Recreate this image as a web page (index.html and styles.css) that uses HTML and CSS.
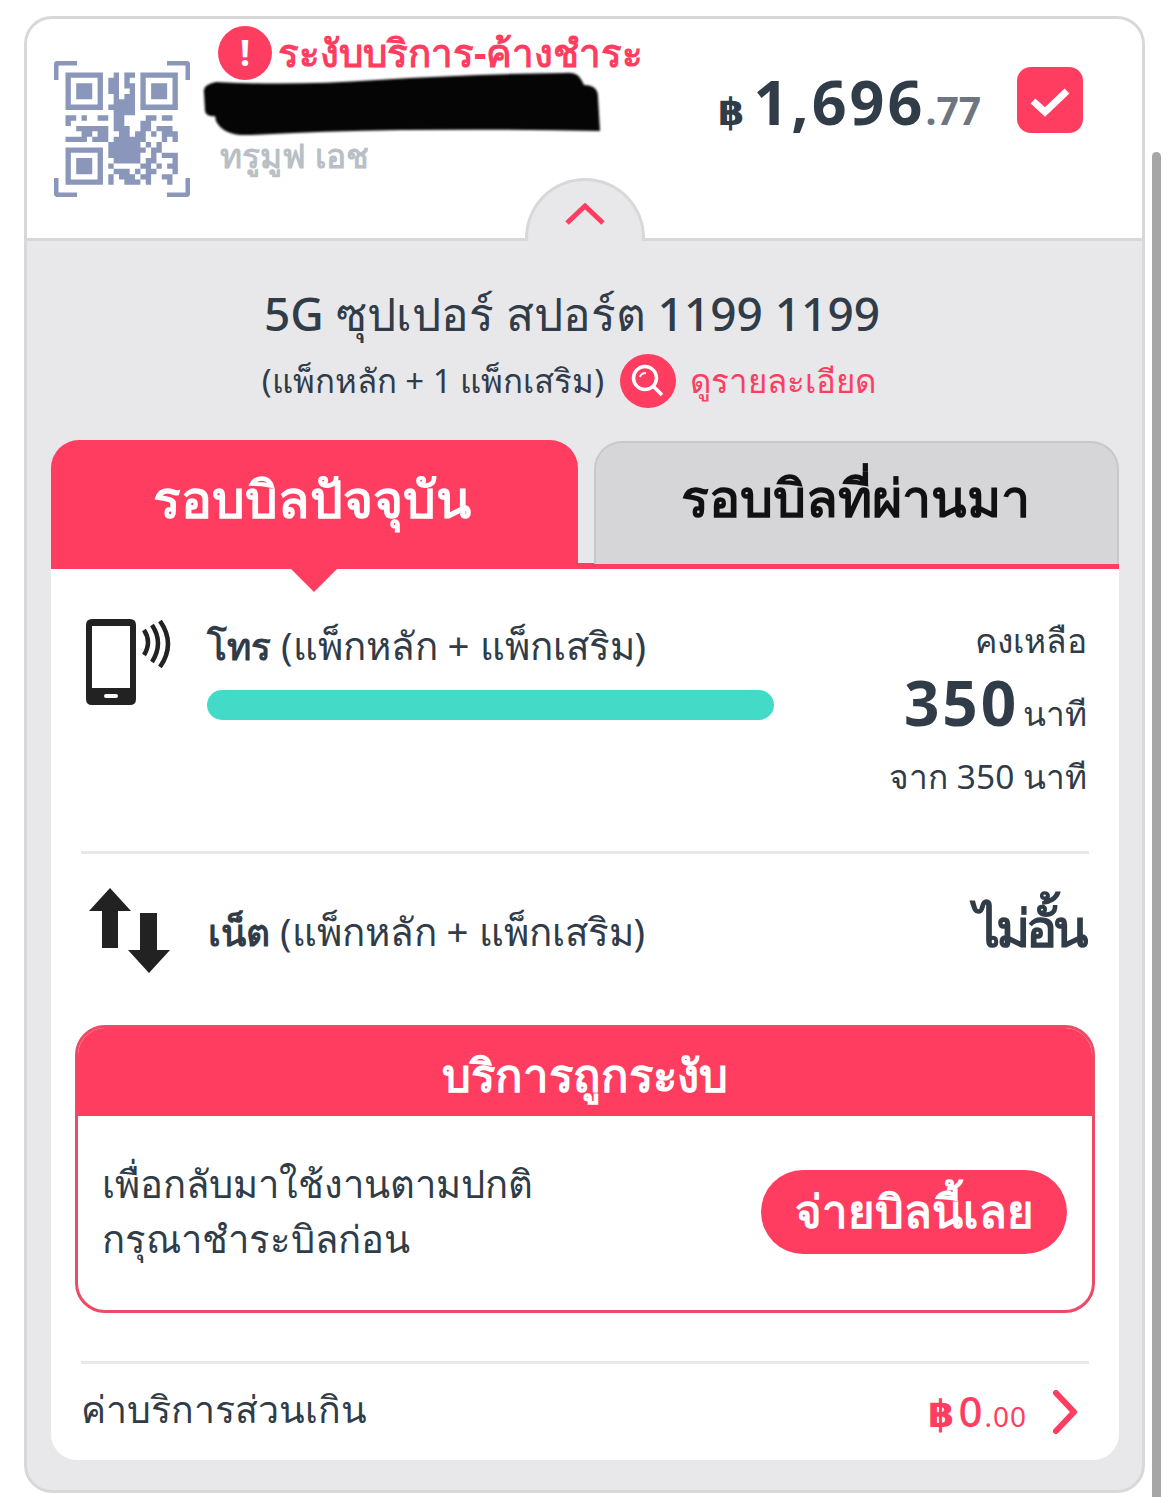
FILE: index.html
```html
<!DOCTYPE html>
<html lang="th">
<head>
  <meta charset="UTF-8" />
  <title>รายละเอียดบริการ</title>
  <link rel="stylesheet" href="styles.css">
</head>
<body>
  <div class="scrollbar"></div>

  <div class="card">
    <div class="head">
      <svg class="qr" viewBox="0 0 136 136" width="136" height="136">
        <path class="qr-corner" d="M2 19V5q0-3 3-3H23M113 2H131q3 0 3 3V19M134 117V131q0 3-3 3H113M23 134H5q-3 0-3-3V117"/>
        <g transform="translate(11.5 11.5) scale(5.35)">
          <path class="qr-mod" d="M.5.5h6v6h-6zM14.500.5h6v6h-6zM.5 14.500h6v6h-6z"/>
          <path class="qr-fill" d="M2 2h3v3H2zM16 2h3v3h-3zM2 16h3v3H2z"/>
          <path class="qr-run" d="M9 .5h1M11 .5h2M8 1.500h2M11 1.500h1M8 2.500h2M11 2.500h2M8 3.500h2M12 3.500h1M9 4.500h1M11 4.500h2M9 5.500h4M8 6.500h5M9 7.500h4M0 8.500h2M3 8.500h1M6 8.500h2M9 8.500h2M15 8.500h2M18 8.500h2M0 9.500h1M9 9.500h2M14 9.500h2M2 10.500h6M9 10.500h3M14 10.500h2M17 10.500h3M3 11.500h2M6 11.500h2M10 11.500h2M13 11.500h2M16 11.500h1M18 11.500h3M0 12.500h4M5 12.500h3M9 12.500h6M18 12.500h1M20 12.500h1M8 13.500h6M15 13.500h1M17 13.500h1M8 14.500h7M16 14.500h2M8 15.500h6M16 15.500h1M18 15.500h3M9 16.500h5M15 16.500h2M20 16.500h1M8 17.500h1M14 17.500h2M17 17.500h1M19 17.500h2M9 18.500h3M13 18.500h1M15 18.500h2M20 18.500h1M8 19.500h1M10 19.500h3M14 19.500h2M18 19.500h2M8 20.500h1M11 20.500h3M15 20.500h1M19 20.500h1"/>
        </g>
      </svg>

      <div class="account">
        <div class="status">
          <span class="status-dot">!</span>
          <span class="status-text">ระงับบริการ-ค้างชำระ</span>
        </div>
        <svg class="redact" viewBox="0 0 398 64" width="398" height="64">
          <path d="M2 22Q0 14 14 11Q90 15 175 9Q265 3 362 2Q376 0 380 10L382 14Q396 14 396 26L398 60Q300 58 200 59Q120 60 50 64Q22 66 14 50L13 45Q4 46 3 40z"/>
        </svg>
        <div class="operator">ทรูมูฟ เอช</div>
      </div>

      <div class="price">
        <span class="baht">฿</span><span class="price-main">1,696</span><span class="price-sub">.77</span>
      </div>

      <div class="check">
        <svg viewBox="0 0 66 66" width="66" height="66">
          <path d="M16 34L28 45L50 24"/>
        </svg>
      </div>

      <div class="toggle">
        <svg viewBox="0 0 40 22" width="40" height="22">
          <path d="M2 20L20 3L38 20"/>
        </svg>
      </div>
    </div>

    <div class="body">
      <h1 class="plan-name">5G ซุปเปอร์ สปอร์ต 1199 1199</h1>
      <div class="plan-sub">
        <span>(แพ็กหลัก + 1 แพ็กเสริม)</span>
        <span class="search-dot">
          <svg viewBox="0 0 56 56" width="56" height="56">
            <circle cx="25" cy="24" r="11.500"/>
            <path d="M34 33L42 41"/>
            <path class="glint" d="M20 23Q21 19 26 19"/>
          </svg>
        </span>
        <span class="plan-link">ดูรายละเอียด</span>
      </div>

      <div class="tabs">
        <div class="tab tab-active">รอบบิลปัจจุบัน</div>
        <div class="tab tab-idle">รอบบิลที่ผ่านมา</div>
      </div>

      <div class="panel">
        <div class="usage usage-call">
          <svg class="usage-icon" viewBox="0 0 90 86" width="90" height="86">
            <path fill-rule="evenodd" d="M6 0H44Q50 0 50 6V80Q50 86 44 86H6Q0 86 0 80V6Q0 0 6 0zM6 7V69H44V7zM20 75Q18 75 18 77T20 79H30Q32 79 32 77T30 75z"/>
            <path class="wave" d="M58 11Q66 23 58 36M66 6Q78 24 66 43M74 2Q90 25 74 48"/>
          </svg>
          <div class="usage-main">
            <div class="usage-label"><b>โทร</b> (แพ็กหลัก + แพ็กเสริม)</div>
            <div class="bar"></div>
          </div>
          <div class="usage-right">
            <div class="remain">คงเหลือ</div>
            <div class="amount"><b>350</b> นาที</div>
            <div class="total">จาก 350 นาที</div>
          </div>
        </div>

        <div class="usage usage-net">
          <svg class="usage-icon" viewBox="0 0 82 88" width="82" height="88">
            <path d="M21 1L42 24H29V61H13V24H0z"/>
            <path d="M60 86L39 63H51V26H68V63H81z"/>
          </svg>
          <div class="usage-label"><b>เน็ต</b> (แพ็กหลัก + แพ็กเสริม)</div>
          <div class="unlimited">ไม่อั้น</div>
        </div>

        <div class="notice">
          <div class="notice-title">บริการถูกระงับ</div>
          <div class="notice-body">
            <div class="notice-text">เพื่อกลับมาใช้งานตามปกติ<br>กรุณาชำระบิลก่อน</div>
            <div class="pay-btn">จ่ายบิลนี้เลย</div>
          </div>
        </div>

        <div class="extra">
          <span class="extra-label">ค่าบริการส่วนเกิน</span>
          <span class="extra-price"><span class="extra-baht">฿</span><span class="extra-main">0</span><small>.00</small></span>
          <svg class="extra-arrow" viewBox="0 0 26 44" width="26" height="44">
            <path d="M3 3L21 22L3 41"/>
          </svg>
        </div>
      </div>
    </div>
  </div>
</body>
</html>
```

FILE: styles.css
```css
:root {
  --pink: #ff3d60;
  --ink: #303c48;
  --grey: #e8e8ea;
  --line: #d8d8da;
}

html,
body {
  margin: 0;
  background: #fff;
}

body {
  padding: 16px 25px 0 24px;
  font-family: "Noto Sans", "Open Sans", "DejaVu Sans", sans-serif;
  color: var(--ink);
  height: 1481px;
  overflow: hidden;
  position: relative;
}

.scrollbar {
  position: absolute;
  right: 9px;
  top: 152px;
  bottom: 0;
  width: 9px;
  background: #a6a6a6;
  border-radius: 5px 5px 0 0;
}

.card {
  width: 1121px;
  height: 1477px;
  box-sizing: border-box;
  border: 3px solid var(--line);
  border-radius: 28px;
  background: var(--grey);
  overflow: hidden;
}

/* top row */
.head {
  position: relative;
  height: 222px;
  box-sizing: border-box;
  background: #fff;
  border-bottom: 3px solid var(--line);
  display: flex;
  padding-left: 27px;
}

.qr {
  margin-top: 42px;
  flex: none;
}

.qr-corner {
  fill: none;
  stroke: #8a97bb;
  stroke-width: 5;
}

.qr-mod {
  fill: none;
  stroke: #8a97bb;
  stroke-width: 1;
}

.qr-fill {
  fill: #8a97bb;
}

.qr-run {
  fill: none;
  stroke: #8a97bb;
  stroke-width: 1;
}

.account {
  width: 498px;
  margin-left: 28px;
  padding-top: 7px;
}

.status {
  display: flex;
  align-items: center;
  gap: 6px;
  height: 54px;
}

.status-dot {
  flex: none;
  width: 54px;
  height: 54px;
  border-radius: 50%;
  background: var(--pink);
  color: #fff;
  font-size: 36px;
  font-weight: 700;
  line-height: 54px;
  text-align: center;
}

.status-text {
  font-size: 38.500px;
  font-weight: 700;
  color: var(--pink);
  white-space: nowrap;
}

.redact {
  display: block;
  margin: -9px 0 0 -16px;
  filter: blur(0.8px);
}

.redact path {
  fill: #050505;
}

.operator {
  margin: -2px 0 0 2px;
  font-size: 33.500px;
  font-weight: 700;
  line-height: 44px;
  color: #b9bfc6;
  white-space: nowrap;
}

.price {
  margin: 45px 0 0 2px;
  height: 76px;
  white-space: nowrap;
  font-weight: 700;
}

.baht {
  font-size: 38px;
  margin-right: 9px;
}

.price-main {
  font-size: 61px;
  line-height: 76px;
  letter-spacing: 3px;
}

.price-sub {
  font-size: 39px;
  color: #6d7680;
}

.check {
  position: absolute;
  left: 990px;
  top: 48px;
  width: 66px;
  height: 66px;
  border-radius: 14px;
  background: var(--pink);
}

.check path {
  fill: none;
  stroke: #fff;
  stroke-width: 7;
}

.toggle {
  position: absolute;
  left: 498px;
  top: 159px;
  width: 120px;
  height: 63px;
  box-sizing: border-box;
  border: 3px solid var(--line);
  border-bottom: none;
  border-radius: 60px 60px 0 0;
  background: var(--grey);
  text-align: center;
}

.toggle svg {
  margin-top: 22px;
}

.toggle path {
  fill: none;
  stroke: var(--pink);
  stroke-width: 5;
}

/* plan title */
.body {
  padding: 0 23px 0 24px;
}

.plan-name {
  margin: 42px 0 0;
  padding-right: 26px;
  font-size: 46px;
  font-weight: 500;
  line-height: 60px;
  text-align: center;
  white-space: nowrap;
}

.plan-sub {
  display: flex;
  align-items: center;
  justify-content: center;
  gap: 14px;
  height: 54px;
  margin-top: 11px;
  padding-right: 32px;
  font-size: 33px;
  white-space: nowrap;
}

.search-dot {
  width: 56px;
  height: 54px;
  margin-left: 2px;
  border-radius: 50%;
  background: var(--pink);
}

.search-dot svg {
  display: block;
}

.search-dot circle,
.search-dot path {
  fill: none;
  stroke: #fff;
  stroke-width: 3.500;
}

.search-dot .glint {
  stroke-width: 2;
}

.plan-link {
  color: var(--pink);
  font-weight: 500;
}

/* tabs */
.tabs {
  display: flex;
  gap: 16px;
  margin-top: 32px;
  height: 129px;
}

.tab {
  display: flex;
  align-items: center;
  justify-content: center;
  padding-bottom: 10px;
  box-sizing: border-box;
  font-weight: 700;
  border-radius: 28px 28px 0 0;
  white-space: nowrap;
}

.tab-active {
  position: relative;
  width: 527px;
  padding-right: 5px;
  font-size: 51.500px;
  background: var(--pink);
  color: #fff;
}

.tab-active::after {
  content: "";
  position: absolute;
  left: 239px;
  top: 128px;
  border-left: 24px solid transparent;
  border-right: 24px solid transparent;
  border-top: 24px solid var(--pink);
}

.tab-idle {
  width: 525px;
  height: 123px;
  margin-top: 1px;
  padding-right: 3px;
  font-size: 52px;
  background: #d6d6d8;
  color: #111;
  border: 2px solid #c8c8ca;
  border-bottom: none;
}

/* white panel */
.panel {
  height: 897px;
  box-sizing: border-box;
  background: #fff;
  border-top: 6px solid var(--pink);
  margin-top: -6px;
  border-radius: 0 0 26px 26px;
  padding: 0 30px;
}

.usage {
  display: flex;
  align-items: flex-start;
}

.usage-call {
  height: 285px;
  padding-top: 50px;
  box-sizing: border-box;
  border-bottom: 3px solid var(--grey);
}

.usage-icon {
  flex: none;
  margin-left: 5px;
  fill: #222;
}

.wave {
  fill: none;
  stroke: #222;
  stroke-width: 4.500;
}

.usage-main {
  margin: 1px 0 0 31px;
  width: 567px;
}

.usage-label {
  font-size: 38.500px;
  line-height: 50px;
  white-space: nowrap;
}

.usage-label b {
  font-size: 37px;
}

.bar {
  height: 30px;
  margin-top: 19px;
  border-radius: 15px;
  background: #43dbc8;
}

.usage-right {
  flex: 1;
  margin-top: -3px;
  padding-right: 2px;
  text-align: right;
  font-size: 33.500px;
  white-space: nowrap;
}

.remain {
  line-height: 48px;
}

.amount {
  line-height: 76px;
}

.amount b {
  font-size: 62px;
  letter-spacing: 3px;
  margin-right: -5px;
}

.total {
  line-height: 50px;
}

.usage-net {
  align-items: center;
  height: 154px;
}

.usage-net .usage-icon {
  margin-left: 8px;
}

.usage-net .usage-label {
  margin-left: 37px;
}

.unlimited {
  margin: -6px 0 0 auto;
  padding-right: 4px;
  font-size: 52px;
  font-weight: 700;
  letter-spacing: -4px;
  white-space: nowrap;
}

/* suspended notice */
.notice {
  margin: 17px -6px 0;
  height: 288px;
  box-sizing: border-box;
  border: 3px solid #ec4a66;
  border-radius: 30px;
  overflow: hidden;
}

.notice-title {
  height: 88px;
  background: var(--pink);
  color: #fff;
  font-size: 45.500px;
  font-weight: 700;
  line-height: 92px;
  text-align: center;
  white-space: nowrap;
}

.notice-body {
  display: flex;
  align-items: center;
  justify-content: space-between;
  height: 192px;
  padding: 0 25px 0 24px;
}

.notice-text {
  font-size: 38.200px;
  line-height: 55px;
  white-space: nowrap;
  margin-top: -2px;
}

.pay-btn {
  width: 306px;
  height: 84px;
  border-radius: 42px;
  background: var(--pink);
  color: #fff;
  font-size: 45.500px;
  font-weight: 700;
  line-height: 80px;
  text-align: center;
  white-space: nowrap;
}

.extra {
  display: flex;
  align-items: center;
  margin-top: 48px;
  height: 92px;
  border-top: 3px solid var(--grey);
}

.extra-label {
  font-size: 37.500px;
  white-space: nowrap;
}

.extra-price {
  margin-left: auto;
  color: var(--pink);
  white-space: nowrap;
  font-size: 40px;
}

.extra-baht {
  font-weight: 700;
  font-size: 38px;
  margin-right: 4px;
}

.extra-main {
  font-size: 42px;
  font-weight: 500;
  letter-spacing: 2px;
}

.extra-price small {
  font-size: 28px;
  letter-spacing: 1px;
}

.extra-arrow {
  margin: 4px 10px 0 26px;
}

.extra-arrow path {
  fill: none;
  stroke: var(--pink);
  stroke-width: 6;
  stroke-linecap: round;
  stroke-linejoin: round;
}
```
